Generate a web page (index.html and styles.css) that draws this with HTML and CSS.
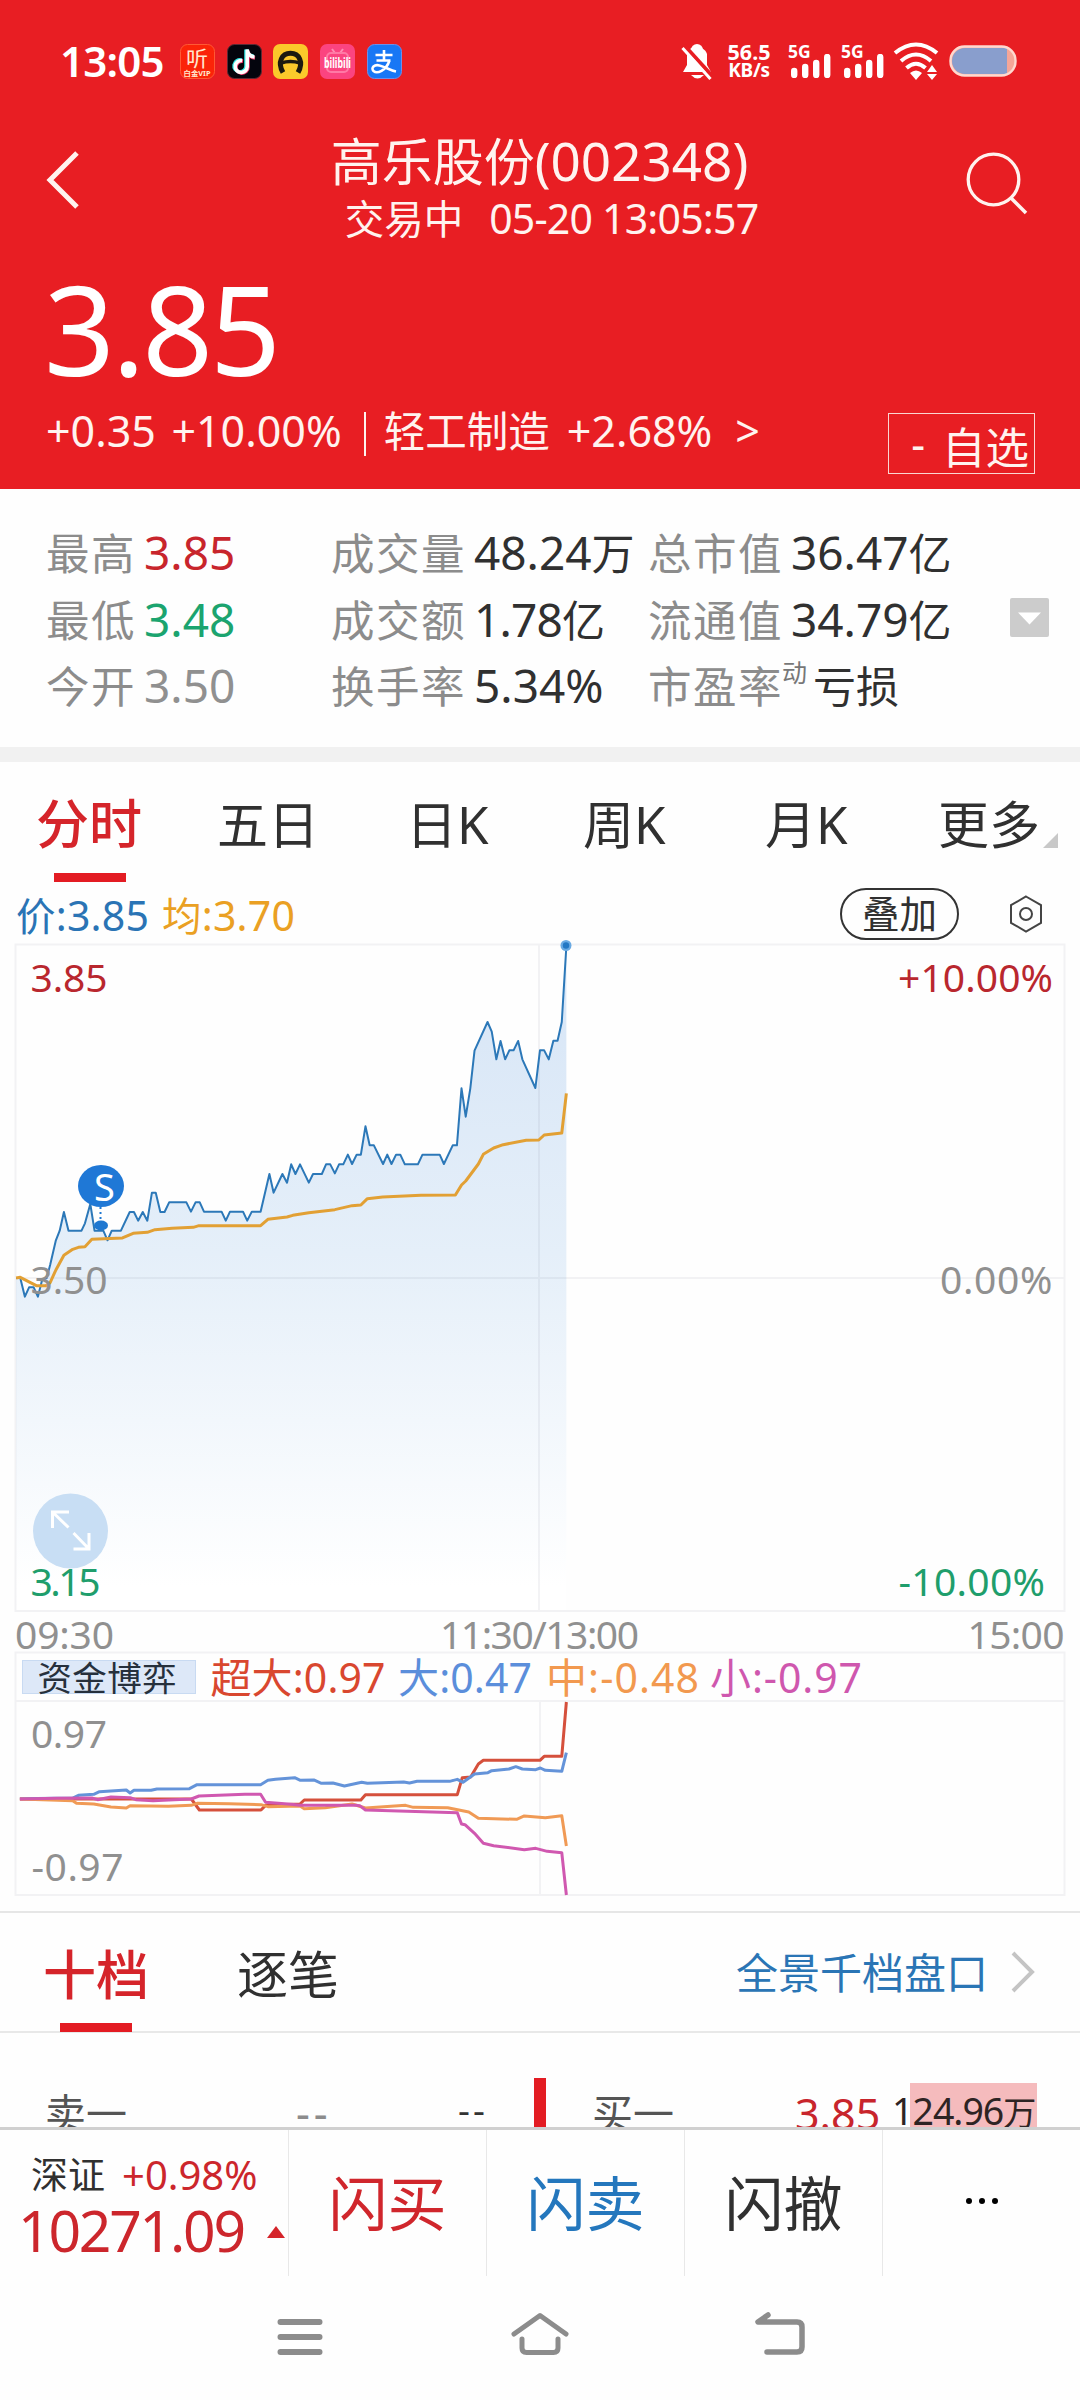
FILE: index.html
```html
<!DOCTYPE html>
<html lang="zh-CN">
<head>
<meta charset="utf-8">
<title>高乐股份(002348)</title>
<link rel="stylesheet" href="styles.css">
</head>
<body>
<header class="header">
  <div class="status">
    <span class="clock">13:05</span>
    <div class="apps">
      <svg class="app" viewBox="0 0 35 35"><rect x=".5" y=".5" width="34" height="34" rx="7" fill="#fb2408" stroke="#ff5a35"/><text x="6" y="22" font-size="21" textLength="22" lengthAdjust="spacingAndGlyphs" fill="#ffe9d0">听</text><text x="3.500" y="31.500" font-size="7" textLength="27" font-weight="700" lengthAdjust="spacingAndGlyphs" fill="#ffe9d0">白金VIP</text></svg>
      <svg class="app" viewBox="0 0 35 35"><rect x=".5" y=".5" width="34" height="34" rx="7" fill="#04050d" stroke="#5b2a35"/><g fill="none" stroke-width="3.600"><path d="M14.500 16a6 6 0 1 0 4.500 6V5.500c.5 4 3.500 6 7.500 6.500" stroke="#2fe3e0"/><path d="M16 17.200a6 6 0 1 0 5 6V7.500c.5 3.500 3 6 7 6.500" stroke="#f0386b"/><path d="M15.200 16.600a6 6 0 1 0 5 6V5.500c.5 4 3 7 7.300 7.500" stroke="#fff"/></g></svg>
      <svg class="app" viewBox="0 0 35 35"><rect width="35" height="35" rx="7" fill="#fbc92b"/><path d="M10 28.500C4 18 9 9.300 17.500 9.300S31 18 25 28.500" fill="none" stroke="#1c1a10" stroke-width="5"/><path d="M8 19q9.500-3 19 0" fill="none" stroke="#1c1a10" stroke-width="3.600"/></svg>
      <svg class="app" viewBox="0 0 35 35"><rect width="35" height="35" rx="7" fill="#fb4480"/><path d="M12 5l3 4m8-4l-3 4" stroke="#ff8db3" stroke-width="2"/><rect x="7" y="9" width="21" height="19" rx="4" fill="none" stroke="#ff79a5" stroke-width="2"/><text x="4" y="23.500" font-size="14" font-weight="700" textLength="27" lengthAdjust="spacingAndGlyphs" fill="#fff">bilibili</text></svg>
      <svg class="app" viewBox="0 0 35 35"><rect x=".5" y=".5" width="34" height="34" rx="7" fill="#1877f5" stroke="#6c8fe8"/><path d="M8.500 11h17M17 6v10M9.500 16.500h14M22.500 16.500C19 27 10 30 6.500 27c-3-3 1-7 6-5.500 6 1.500 11 5 16.500 6" fill="none" stroke="#fff" stroke-width="2.600"/></svg>
    </div>
    <div class="signals">
      <svg class="bell" viewBox="0 0 32 38"><path d="M6 11C9 3 23 3 26 12v11l4 7H2l4-7z" fill="#fff"/><circle cx="16" cy="8" r="6" fill="#fff"/><path d="M10 33h13q-6.500 7-13 0z" fill="#fff"/><path d="M3 3L31 34" stroke="#e81e23" stroke-width="4"/><path d="M1.500 6L29.500 37" stroke="#fff" stroke-width="3"/></svg>
      <div class="rate"><span>56.5</span><span>KB/s</span></div>
      <div class="cell"><span>5G</span><svg viewBox="0 0 40 24"><path d="M3.200 17v4M14.200 13v8M25.200 9v12M36.200 3v18" stroke="#fff" stroke-width="6.400" stroke-linecap="round"/></svg></div>
      <div class="cell"><span>5G</span><svg viewBox="0 0 40 24"><path d="M3.200 17v4M14.200 13v8M25.200 9v12M36.200 3v18" stroke="#fff" stroke-width="6.400" stroke-linecap="round"/></svg></div>
      <svg class="wifi" viewBox="0 0 46 38"><path d="M2 11Q23-6 44 11M8 19Q23 6 38 19M13.500 26Q23 17.500 32.500 26" fill="none" stroke="#fff" stroke-width="4"/><path d="M17 31q6-5 12 0l-6 7z" fill="#fff"/><path d="M34 30l5-7 5 7zM34 32h10l-5 6z" fill="#fff"/></svg>
      <svg class="battery" viewBox="0 0 68 32"><rect x="1.500" y="1.500" width="65" height="29" rx="14" fill="#f5a698"/><path d="M58 3H16a13 13 0 0 0 0 26h42z" fill="#899ecd"/><rect x="1.500" y="1.500" width="65" height="29" rx="14" fill="none" stroke="#ffd9cf" stroke-width="2.400"/></svg>
    </div>
  </div>
  <div class="titlebar">
    <svg class="back" viewBox="0 0 34 60"><path d="M31 3L4 30l27 27" fill="none" stroke="#fff3ef" stroke-width="5"/></svg>
    <div class="title">
      <h1><span class="han">高乐股份</span>(002348)</h1>
      <p><span class="han">交易中</span><span class="stamp">05-20 13:05:57</span></p>
    </div>
    <svg class="search" viewBox="0 0 62 64"><circle cx="27.500" cy="28.500" r="25.300" fill="none" stroke="#fff3ef" stroke-width="3.300"/><path d="M45 47l15 15" stroke="#fff3ef" stroke-width="3.600"/></svg>
  </div>
  <div class="price">3.85</div>
  <div class="change">
    <span>+0.35</span><span class="pct">+10.00%</span><i class="bar"></i><span class="sector">轻工制造</span><span class="spct">+2.68%</span><span class="more">&gt;</span>
    <button class="watch"><span>-</span><b>自选</b></button>
  </div>
</header>

<section class="stats">
  <dl><div><dt>最高</dt><dd class="up">3.85</dd></div><div><dt>最低</dt><dd class="down">3.48</dd></div><div><dt>今开</dt><dd class="flat">3.50</dd></div></dl>
  <dl><div><dt>成交量</dt><dd>48.24<em>万</em></dd></div><div><dt>成交额</dt><dd class="tight">1.78<em>亿</em></dd></div><div><dt>换手率</dt><dd>5.34%</dd></div></dl>
  <dl><div><dt>总市值</dt><dd>36.47<em>亿</em></dd></div><div><dt>流通值</dt><dd>34.79<em>亿</em></dd></div><div><dt>市盈率</dt><sup>动</sup><dd><em>亏损</em></dd></div></dl>
  <svg class="expand" viewBox="0 0 39 39"><rect width="39" height="39" rx="2" fill="#ccc"/><path d="M8 14.500h23L19.500 26.500z" fill="#fff"/></svg>
</section>

<nav class="tabs">
  <a class="on">分时</a><a>五日</a><a>日K</a><a>周K</a><a>月K</a><a>更多<svg viewBox="0 0 15 15"><path d="M15 0v15H0z" fill="#c8c8c8"/></svg></a>
</nav>

<div class="legend">
  <span class="now"><span class="han">价</span>:3.85</span><span class="avg"><span class="han">均</span>:3.70</span>
  <button class="overlay">叠加</button>
  <svg class="gear" viewBox="0 0 34 38"><path d="M17 1.500l15 8.700v17.600L17 36.500 2 27.800V10.200z" fill="none" stroke="#444" stroke-width="2"/><circle cx="17" cy="19" r="6" fill="none" stroke="#444" stroke-width="2"/></svg>
</div>

<svg class="chart" viewBox="0 940 1080 971">
  <defs><linearGradient id="area" gradientUnits="userSpaceOnUse" x1="0" y1="0" x2="0" y2="2000"><stop offset="0" stop-color="#d5e4f6"/><stop offset=".5" stop-color="#e5eff9"/><stop offset="1" stop-color="#ffffff"/></linearGradient></defs>
  <g transform="translate(0 920) scale(.38268 .33333)">
    <path fill="url(#area)" d="M42 1074H53L65 1130 76 1102H88L99 1130 110 1080 122 1074 131 1035 146 961 156 932 167 876 179 932H213L222 910 236 852 247 932H270L281 961 292 932H316L339 876H350L361 902 373 876 385 902 397 818H407L419 876H430L442 847H487L499 875 511 847H522L533 875H579L590 902 601 875H635L646 902 658 875H681L704 762 715 818 738 762 750 788 761 733 772 762 784 733 807 788 818 762H841L852 733H863L875 760 886 733H897L909 704 920 732 932 704H943L955 619 966 676H977L1001 732 1012 704 1023 732 1035 704H1046L1058 733H1092L1104 704H1149L1160 732 1183 676H1194L1206 505 1217 590 1229 505 1240 392 1274 306 1285 335 1297 418 1308 363 1320 418 1331 391H1342L1354 363 1365 418 1399 504 1411 391H1422L1434 418 1446 362H1457L1468 306 1480 78V2070H42z"/>
  </g>
  <g class="grid"><path d="M15.500 944.500h1049v666.500h-1049zM15.500 1278h1049M539 944.500V1611M15.500 1652.500h1049v242.500h-1049zM15.500 1701h1049M540 1701v194"/></g>
  <g transform="translate(0 920) scale(.38268 .33333)">
    <path class="line price-line" d="M42 1074H53L65 1130 76 1102H88L99 1130 110 1080 122 1074 131 1035 146 961 156 932 167 876 179 932H213L222 910 236 852 247 932H270L281 961 292 932H316L339 876H350L361 902 373 876 385 902 397 818H407L419 876H430L442 847H487L499 875 511 847H522L533 875H579L590 902 601 875H635L646 902 658 875H681L704 762 715 818 738 762 750 788 761 733 772 762 784 733 807 788 818 762H841L852 733H863L875 760 886 733H897L909 704 920 732 932 704H943L955 619 966 676H977L1001 732 1012 704 1023 732 1035 704H1046L1058 733H1092L1104 704H1149L1160 732 1183 676H1194L1206 505 1217 590 1229 505 1240 392 1274 306 1285 335 1297 418 1308 363 1320 418 1331 391H1342L1354 363 1365 418 1399 504 1411 391H1422L1434 418 1446 362H1457L1468 306 1480 78"/>
    <path class="line avg-line" d="M42 1074L53 1072 95 1097H120L131 1088 146 1050 167 1006 190 988 205 982 222 980 240 958 320 954 348 940 385 937 405 929 450 925 505 922 520 917H681L700 898 750 891 765 886 807 878 875 869 920 857 943 855 960 836 1000 831 1100 826 1190 825 1206 795 1217 783 1250 732 1263 703 1290 684 1315 674 1375 661 1408 660 1422 645 1468 639 1480 520"/>
  </g>
  <circle cx="566" cy="945.500" r="5.500" fill="#6aaae3"/><circle cx="566" cy="945.500" r="3.200" fill="#2478c4"/>
  <path d="M98 1207v14M103 1207v14" stroke="#fff" stroke-width="2"/><path d="M100.500 1207v14" stroke="#1f78d1" stroke-width="2" stroke-dasharray="2 3"/>
  <ellipse cx="101" cy="1225.500" rx="7" ry="5" fill="#1f78d1"/><ellipse cx="101" cy="1186" rx="23" ry="21" fill="#1f78d6"/>
  <text x="94" y="1201" font-size="38" fill="#fff">S</text>
  <circle cx="70.500" cy="1531" r="37.500" fill="#c8def4"/>
  <path d="M69 1512H52.500v16M52.500 1512l16 15.500M73.500 1549H89v-16M89 1549l-15.500-16" fill="none" stroke="#fff" stroke-width="3"/>
  <g class="axis">
    <text class="up" x="30.500" y="991.500" textLength="77">3.85</text>
    <text x="30.500" y="1293.500" textLength="77">3.50</text>
    <text class="down" x="30.500" y="1595.500" textLength="70">3.15</text>
    <text class="up" x="898" y="991.500" textLength="155">+10.00%</text>
    <text x="940" y="1293.500" textLength="112.500">0.00%</text>
    <text class="down" x="898.500" y="1595.500" textLength="146.500">-10.00%</text>
    <text x="15" y="1648.500" textLength="99">09:30</text>
    <text x="440" y="1648.500" textLength="199">11:30/13:00</text>
    <text x="967.500" y="1648.500" textLength="97">15:00</text>
    <text x="31" y="1747.500" textLength="76">0.97</text>
    <text x="31.500" y="1881" textLength="92">-0.97</text>
  </g>
  <rect x="22.500" y="1660.500" width="173" height="33" fill="#dde8f8" stroke="#c8daf2"/>
  <text x="37.500" y="1691" font-size="34.500" fill="#26303c" textLength="139">资金博弈</text>
  <g font-size="41">
    <text x="210.500" y="1693" fill="#d9472f" textLength="175">超大:0.97</text>
    <text x="398" y="1693" fill="#5b8edb" textLength="134">大:0.47</text>
    <text x="546" y="1693" fill="#f2994f" textLength="153">中:-0.48</text>
    <text x="710" y="1693" fill="#cf57ae" textLength="152">小:-0.97</text>
  </g>
  <g class="flows" transform="translate(0 1640) scale(.38268 .33333)">
    <path class="line" stroke="#d5503c" d="M52 477H500L521 510H682L694 496 784 492 795 480H943L955 464H1195L1208 413 1230 411 1250 372 1263 361H1411L1422 349H1468L1480 186"/>
    <path class="line" stroke="#6493d9" d="M52 476L190 474 205 466 245 463 260 455 330 450 340 459 350 451H395L410 447 495 446 515 434H681L700 421 720 418 770 413 785 421 820 420 840 430 870 429 900 438 945 427 960 430 1055 426 1070 429 1090 424H1175L1195 418 1210 427 1240 402 1275 398 1285 392 1330 387 1348 380 1365 387 1400 389 1412 384 1425 391 1468 394 1480 338"/>
    <path class="line" stroke="#f09a55" d="M52 477L190 482 200 490 245 492 290 501 330 504 340 497 440 499 500 496 515 490 600 491 682 494 700 500 784 498 795 506 850 503 920 492 955 504 1060 496 1080 502 1170 503 1225 516 1250 535 1350 538 1370 528 1425 533 1468 527 1480 618"/>
    <path class="line" stroke="#d058b0" d="M52 477L150 475 240 474 255 479 290 471 340 473 355 479 400 482 455 479 500 477 520 468 640 463H681L694 487 760 493 784 496 930 496 940 497 955 510 1195 518 1206 552 1215 554 1240 580 1263 610 1290 617 1370 629 1400 625 1430 634 1468 638 1480 765"/>
  </g>
</svg>

<nav class="depth">
  <a class="on">十档</a><a>逐笔</a>
  <span class="link">全景千档盘口</span>
  <svg viewBox="0 0 24 42"><path d="M2 2l19 19L2 40" fill="none" stroke="#c4c4c4" stroke-width="4"/></svg>
</nav>

<section class="book">
  <span class="side">卖一</span><span class="dash">--</span><span class="dash dark">--</span><i class="split"></i>
  <span class="side">买一</span><span class="bid">3.85</span><span class="vol">124.96<em>万</em></span>
</section>

<footer class="actions">
  <div class="index"><p><span>深证</span><b>+0.98%</b></p><p class="points">10271.09<svg viewBox="0 0 18 12"><path d="M9 0l9 12H0z" fill="#d5242a"/></svg></p></div>
  <a class="buy">闪买</a><a class="sell">闪卖</a><a>闪撤</a>
  <a><svg class="dots" viewBox="0 0 34 8"><circle cx="4" cy="4" r="3"/><circle cx="17" cy="4" r="3"/><circle cx="30" cy="4" r="3"/></svg></a>
</footer>

<div class="sysnav">
  <svg viewBox="0 0 60 48"><path d="M10.500 10h39M10.500 25h39M10.500 40h39" stroke-width="6"/></svg>
  <svg viewBox="0 0 60 48"><path d="M4 22L30 3.500 56 22" stroke-width="5"/><path d="M12 27v9q0 4.500 4.500 4.500h27q4.500 0 4.500-4.500v-9" stroke-width="5"/></svg>
  <svg viewBox="0 0 60 48"><path d="M18 3L8 10h39q5 0 5 5v20q0 5-5 5H17" stroke-width="5.500"/></svg>
</div>
</body>
</html>
```
FILE: styles.css
```css
* { box-sizing: border-box; }
body {
  margin: 0;
  width: 1080px;
  height: 2400px;
  background: #fefefe;
  color: #303030;
  font-family: "Noto Sans", "Noto Sans CJK SC", sans-serif;
  overflow: hidden;
}
h1, p, dl, dd { margin: 0; font-weight: 400; }
em, i { font-style: normal; }
b { font-weight: 400; }
a { color: inherit; }
svg { display: block; }
button { font: inherit; color: inherit; background: none; padding: 0; }

.header { height: 489px; background: #e81e23; color: #fff3ef; }
.status { display: flex; align-items: center; height: 122px; padding: 0 63px 0 60px; }
.clock { font-size: 42px; font-weight: 600; letter-spacing: -.8px; line-height: 50px; width: 120px; color: #fff; }
.apps { display: flex; gap: 11.700px; }
.app { width: 35px; height: 35px; }
.signals { display: flex; align-items: center; margin-left: auto; color: #fff; font-weight: 700; }
.bell { width: 32px; height: 38px; }
.rate { display: flex; flex-direction: column; width: 48px; margin-left: 12px; font-size: 21.500px; line-height: 19px; text-align: center; white-space: nowrap; }
.rate span + span { font-size: 19px; letter-spacing: -.3px; }
.cell { width: 42px; margin-left: 17px; font-size: 17.500px; line-height: 13px; }
.cell span { display: block; margin-left: -2px; height: 9px; }
.cell svg { width: 40px; height: 24px; margin-left: 1px; }
.cell + .cell { margin-left: 11px; }
.wifi { width: 46px; height: 38px; margin-left: 8px; }
.battery { width: 68px; height: 32px; margin-left: 10px; }

.titlebar { display: flex; justify-content: space-between; height: 146px; padding: 11px 52px 0 46px; }
.back { width: 34px; height: 60px; margin-top: 17px; }
.title { text-align: center; white-space: nowrap; margin-left: 33px; }
.title h1 { font-size: 53px; line-height: 56px; }
.title h1 .han { font-size: 51px; }
.title p { margin-top: 5px; padding-left: 24px; font-size: 41px; line-height: 48px; letter-spacing: -.8px; }
.title .han { font-size: 39.500px; letter-spacing: 0; }
.stamp { margin-left: 26px; }
.search { width: 62px; height: 64px; margin-top: 18px; }
.price { padding-left: 44px; font-size: 124px; line-height: 120px; letter-spacing: -3px; color: #fff; }
.change { display: flex; height: 70px; margin-top: 18px; padding-left: 46px; padding-right: 45px; font-size: 43px; line-height: 50px; white-space: nowrap; }
.pct { margin-left: 15.500px; }
.bar { width: 2px; height: 44px; margin: 6px 18px 0 22px; background: #fff3ef; }
.sector { font-size: 41.500px; line-height: 51px; }
.spct { margin-left: 17px; }
.more { margin-left: 23px; }
.watch { display: flex; justify-content: flex-end; align-items: center; width: 147px; height: 61px; margin: 7px 0 0 auto; padding-right: 5px; border: 1.500px solid #fbd6d2; line-height: 58px; }
.watch span { margin-right: 17px; }
.watch b { font-size: 43.500px; padding-top: 6px; }

.stats { display: grid; grid-template-columns: 285px 317px 362px 39px; height: 273px; padding: 30px 30px 0 46px; border-bottom: 15px solid #f1f1f1; white-space: nowrap; }
.stats dl > div { display: flex; align-items: baseline; height: 66.500px; line-height: 66.500px; font-size: 46px; }
.stats dt { font-size: 43.500px; letter-spacing: 1.500px; margin-right: 8px; color: #8c8c8c; }
.stats em { font-size: 43px; }
.stats sup { align-self: flex-start; margin-left: -9px; margin-right: 6px; font-size: 25px; line-height: 41px; color: #777; }
.stats .tight { letter-spacing: -.8px; }
.expand { width: 39px; height: 39px; margin-top: 79px; }
.up { color: #c8252c; }
.down { color: #1ba46f; }
.flat { color: #909090; }

.tabs { display: flex; height: 120px; padding-left: 36px; font-size: 51px; line-height: 124px; color: #303030; white-space: nowrap; }
.tabs a { flex: none; }
.tabs a:nth-child(1) { width: 181px; font-size: 53px; }
.tabs a:nth-child(2) { width: 189px; }
.tabs a:nth-child(3) { width: 177px; }
.tabs a:nth-child(4) { width: 182px; }
.tabs a:nth-child(5) { width: 173px; }
.tabs a:nth-child(6) { display: flex; }
.tabs svg { width: 15px; height: 15px; margin: 71px 0 0 3px; }
.on { color: #d5242a; font-weight: 500; display: flex; flex-direction: column; }
.on::after { content: ""; width: 72px; height: 9px; background: #e31c23; flex: none; }
.tabs .on::after { margin: -13px 0 0 18px; }

.legend { display: flex; align-items: flex-start; height: 58px; padding: 6px 37px 0 16px; font-size: 41px; line-height: 54px; letter-spacing: .2px; }
.legend .han { font-size: 39.500px; }
.now { color: #2a74b5; width: 146px; white-space: nowrap; }
.avg { color: #eaa023; }
.overlay { width: 119px; height: 52px; margin-left: auto; border: 2px solid #333; border-radius: 26px; font-size: 37.500px; line-height: 46px; color: #303030; }
.gear { width: 34px; height: 38px; margin: 7px 0 0 50px; }

.chart { width: 1080px; height: 971px; }
.grid path { fill: none; stroke: #5a5070; stroke-opacity: .07; stroke-width: 2; }
.line { fill: none; vector-effect: non-scaling-stroke; stroke-width: 3px; stroke-linejoin: round; }
.price-line { stroke: #2c78b8; stroke-width: 2px; }
.avg-line { stroke: #e2a034; stroke-width: 3px; }
.axis { font-size: 39px; fill: #909090; }
.axis .up { fill: #b9272e; }
.axis .down { fill: #1f9e6c; }

.depth { display: flex; height: 122px; padding: 0 45px 0 43px; border-top: 2px solid #e6e6e6; border-bottom: 2px solid #e8e8e8; font-size: 51px; line-height: 123px; white-space: nowrap; }
.depth a { width: 194px; }
.depth .on { font-size: 53px; line-height: 123px; }
.depth .on::after { margin: -13px 0 0 17px; }
.link { margin-left: auto; font-size: 42px; line-height: 120px; color: #2a75b5; }
.depth svg { width: 24px; height: 42px; margin: 38px 0 0 23px; }

.book { display: grid; grid-template-columns: 251px 162px 76px 58px 181px 118px 146px; height: 94px; padding: 45px 44px 0 45px; font-size: 43px; line-height: 66px; overflow: hidden; white-space: nowrap; }
.side { font-size: 41px; color: #555; padding-top: 2px; }
.dash { color: #8c8c8c; letter-spacing: 4px; font-size: 43px; line-height: 70px; }
.dash.dark { color: #333; font-size: 37px; line-height: 61px; letter-spacing: 3px; }
.split { width: 12px; height: 60px; background: #e31c23; }
.bid { color: #c8252c; line-height: 71px; padding-left: 22px; }
.vol { width: 146px; height: 60px; margin-top: 5px; padding-left: 1px; font-size: 37.500px; line-height: 55px; letter-spacing: -1px; background: linear-gradient(90deg, transparent 19px, #f5bbbd 19px); color: #2e2424; }
.vol em { font-size: 33px; }

.actions { display: grid; grid-template-columns: 289px 198px 198px 198px 197px; height: 146px; border-top: 3px solid #d0d0d0; font-size: 59px; line-height: 146px; text-align: center; background: #fefefe; }
.actions > * { border-right: 1.500px solid #e8e8e8; }
.actions > :last-child { border-right: 0; }
.index { padding: 17px 0 0 31px; text-align: left; }
.index p { display: flex; font-size: 40px; line-height: 56px; white-space: nowrap; }
.index span { font-size: 37px; width: 91px; }
.index b, .points { color: #cc262c; }
.index .points { margin-left: -13px; font-size: 57px; line-height: 54px; letter-spacing: -2.200px; align-items: center; }
.points svg { width: 18px; height: 12px; margin-left: auto; margin-right: 3px; margin-top: 3px; }
.buy { color: #d0262c; }
.sell { color: #2477bd; }
.dots { width: 34px; height: 8px; margin: 67px auto 0; }

.sysnav { display: flex; justify-content: center; gap: 180px; padding-top: 39px; }
.sysnav svg { width: 60px; height: 48px; fill: none; stroke: #8c8c8c; stroke-linecap: round; stroke-linejoin: round; }
```
